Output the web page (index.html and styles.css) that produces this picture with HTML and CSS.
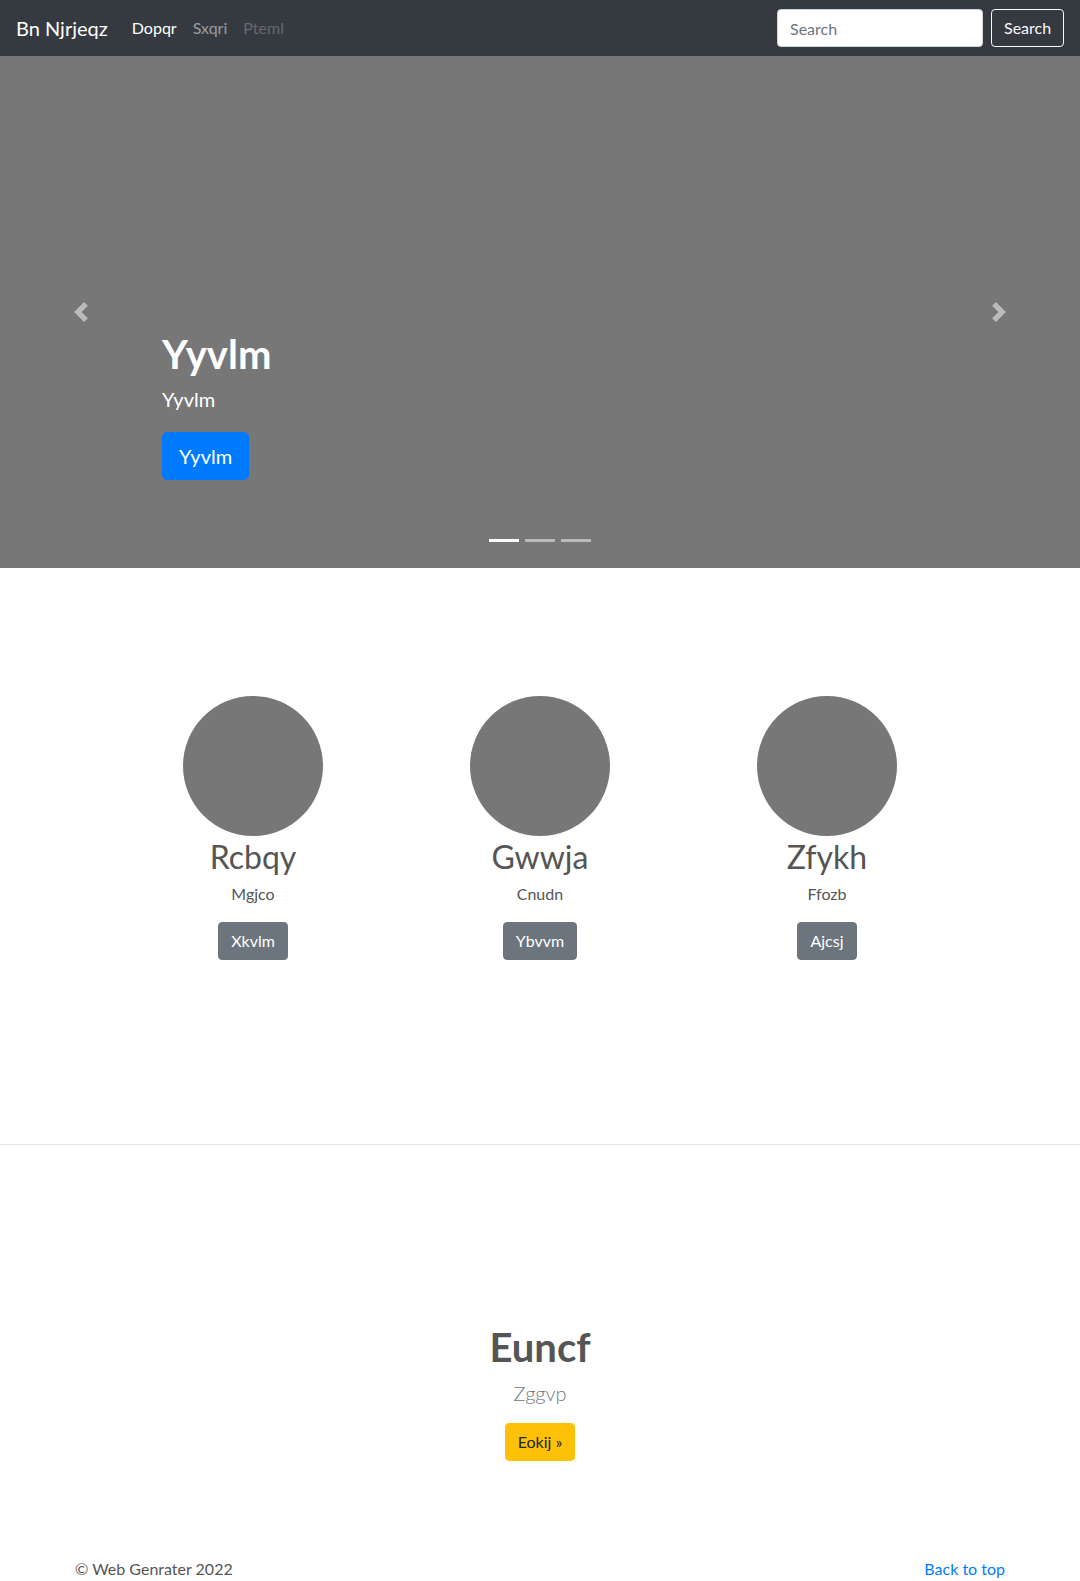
FILE: index.html
```html
<!DOCTYPE html>
<html lang="en">
<head>
<meta charset="utf-8">
<title>Bn Njrjeqz</title>
<link rel="stylesheet" href="styles.css">
</head>
<body>
<header class="navbar">
  <a class="brand" href="#">Bn Njrjeqz</a>
  <nav class="nav">
    <a class="nav-link active" href="#">Dopqr</a>
    <a class="nav-link" href="#">Sxqri</a>
    <a class="nav-link disabled" href="#">Pteml</a>
  </nav>
  <form class="search">
    <input class="search-input" type="text" placeholder="Search">
    <button class="btn-outline-light" type="button">Search</button>
  </form>
</header>

<section class="carousel">
  <a class="control control-prev" href="#">
    <svg class="control-icon" viewBox="0 0 8 8" width="20" height="20"><path fill="#fff" d="M5.25 0l-4 4 4 4 1.5-1.5L4.25 4l2.5-2.5L5.25 0z"/></svg>
  </a>
  <a class="control control-next" href="#">
    <svg class="control-icon" viewBox="0 0 8 8" width="20" height="20"><path fill="#fff" d="M2.75 0l-1.5 1.5L3.75 4l-2.5 2.5L2.75 8l4-4-4-4z"/></svg>
  </a>
  <div class="caption">
    <h1 class="caption-title">Yyvlm</h1>
    <p class="caption-text">Yyvlm</p>
    <a class="btn-primary-lg" href="#">Yyvlm</a>
  </div>
  <ol class="indicators">
    <li class="indicator active"></li>
    <li class="indicator"></li>
    <li class="indicator"></li>
  </ol>
</section>

<section class="marketing">
  <div class="feature">
    <div class="circle"></div>
    <h2 class="feature-title">Rcbqy</h2>
    <p class="feature-text">Mgjco</p>
    <a class="btn-secondary" href="#">Xkvlm</a>
  </div>
  <div class="feature">
    <div class="circle"></div>
    <h2 class="feature-title">Gwwja</h2>
    <p class="feature-text">Cnudn</p>
    <a class="btn-secondary" href="#">Ybvvm</a>
  </div>
  <div class="feature">
    <div class="circle"></div>
    <h2 class="feature-title">Zfykh</h2>
    <p class="feature-text">Ffozb</p>
    <a class="btn-secondary" href="#">Ajcsj</a>
  </div>
</section>

<hr class="divider">

<section class="cta">
  <h1 class="cta-title">Euncf</h1>
  <p class="cta-lead">Zggvp</p>
  <a class="btn-warning" href="#">Eokij &raquo;</a>
</section>

<footer class="footer">
  <p class="copy">&copy; Web Genrater 2022</p>
  <a class="top-link" href="#">Back to top</a>
</footer>
</body>
</html>
```

FILE: styles.css
```css
* { box-sizing: border-box; }
html, body { margin: 0; padding: 0; }
body {
  font-family: "Lato", "Open Sans", "Noto Sans", sans-serif;
  font-size: 16px;
  line-height: 1.5;
  color: #555;
  background: #fff;
}
a { text-decoration: none; }

/* navbar */
.navbar {
  height: 56px;
  background: #343a40;
  display: flex;
  align-items: center;
  padding: 0 16px;
}
.brand {
  color: #fff;
  font-size: 20px;
  line-height: 30px;
  margin-right: 16px;
}
.nav { display: flex; }
.nav-link {
  padding: 8px;
  color: rgba(255,255,255,.5);
}
.nav-link.active { color: #fff; }
.nav-link.disabled { color: rgba(255,255,255,.25); }
.search {
  margin-left: auto;
  display: flex;
  align-items: center;
}
.search-input {
  width: 206px;
  height: 38px;
  margin-right: 8px;
  border: 1px solid #ced4da;
  border-radius: 4px;
  padding: 6px 12px;
  font: inherit;
  color: #495057;
  background: #fff;
}
.search-input::placeholder { color: #6c757d; }
.btn-outline-light {
  height: 38px;
  width: 73px;
  border: 1px solid #f8f9fa;
  border-radius: 4px;
  background: transparent;
  color: #f8f9fa;
  font: inherit;
  padding: 6px 12px;
}

/* carousel */
.carousel {
  position: relative;
  height: 512px;
  background: #777;
  display: flex;
  align-items: flex-end;
}
.control {
  position: absolute;
  top: 0;
  bottom: 0;
  width: 15%;
  display: flex;
  align-items: center;
  justify-content: center;
  opacity: .5;
}
.control-prev { left: 0; }
.control-next { right: 0; }
.control-icon { display: block; }
.caption {
  padding-left: 162px;
  padding-bottom: 88px;
  color: #fff;
}
.caption-title {
  margin: 0 0 6px;
  font-size: 40px;
  line-height: 48px;
  font-weight: 700;
}
.caption-text {
  margin: 0 0 18px;
  font-size: 20px;
  line-height: 30px;
}
.btn-primary-lg {
  display: inline-block;
  background: #007bff;
  color: #fff;
  font-size: 20px;
  line-height: 30px;
  padding: 8px 16px;
  border: 1px solid #007bff;
  border-radius: 5px;
}
.indicators {
  position: absolute;
  left: 0;
  right: 0;
  bottom: 26px;
  margin: 0;
  padding: 0;
  list-style: none;
  display: flex;
  justify-content: center;
}
.indicator {
  width: 30px;
  height: 3px;
  margin: 0 3px;
  background: #fff;
  opacity: .5;
}
.indicator.active { opacity: 1; }

/* marketing */
.marketing {
  display: grid;
  grid-template-columns: repeat(3, 287px);
  justify-content: center;
  padding-top: 128px;
}
.feature {
  display: flex;
  flex-direction: column;
  align-items: center;
  text-align: center;
}
.circle {
  width: 140px;
  height: 140px;
  border-radius: 50%;
  background: #777;
}
.feature-title {
  margin: 2px 0 6px;
  font-size: 32px;
  line-height: 38px;
  font-weight: 400;
  color: #555;
}
.feature-text {
  margin: 0 0 16px;
  font-size: 16px;
  line-height: 24px;
}
.btn-secondary {
  display: inline-block;
  background: #6c757d;
  color: #fff;
  padding: 6px 12px;
  border: 1px solid #6c757d;
  border-radius: 4px;
  line-height: 24px;
}

.divider {
  margin: 184px 0 0;
  border: 0;
  border-top: 1px solid #e5e5e5;
  height: 0;
}

/* cta */
.cta {
  text-align: center;
  padding-top: 178px;
}
.cta-title {
  margin: 0 0 7px;
  font-size: 40px;
  line-height: 48px;
  font-weight: 700;
  color: #555;
}
.cta-lead {
  margin: 0 0 15px;
  font-size: 20px;
  line-height: 30px;
  font-weight: 300;
  color: #6c757d;
}
.btn-warning {
  display: inline-block;
  background: #ffc107;
  color: #212529;
  padding: 6px 12px;
  border: 1px solid #ffc107;
  border-radius: 4px;
  line-height: 24px;
}

/* footer */
.footer {
  width: 960px;
  margin: 0 auto;
  padding: 96px 15px 0;
  display: flex;
  justify-content: space-between;
}
.copy { margin: 0 0 16px; }
.top-link { color: #007bff; line-height: 24px; height: 24px; }
```
